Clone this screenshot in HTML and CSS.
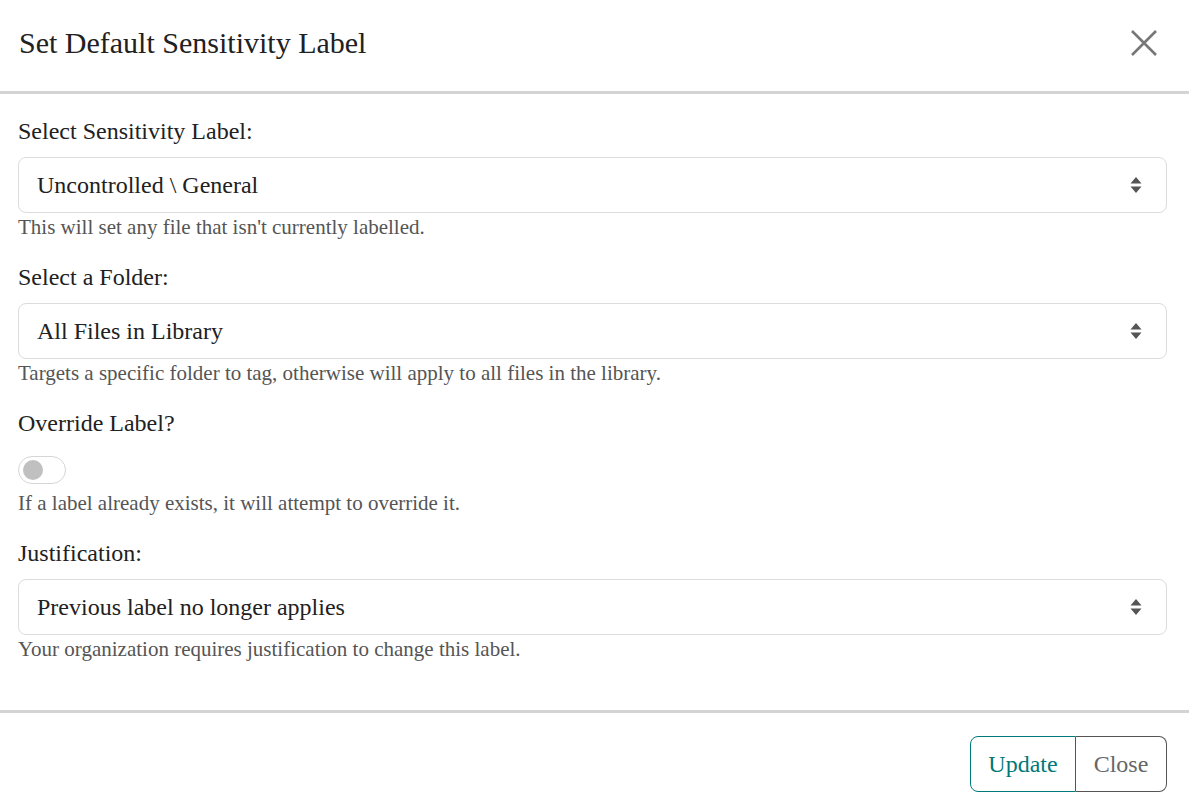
FILE: index.html
```html
<!DOCTYPE html>
<html>
<head>
<meta charset="utf-8">
<link rel="stylesheet" href="styles.css">
</head>
<body>
<div class="modal">
  <div class="header">
    <h1 class="title">Set Default Sensitivity Label</h1>
    <button class="x-btn" aria-label="Close">
      <svg width="28" height="28" viewBox="0 0 28 28"><path d="M2 2 L26 26 M26 2 L2 26" stroke="#777" stroke-width="2.6" fill="none"/></svg>
    </button>
  </div>
  <div class="body">
    <div class="group">
      <div class="label">Select Sensitivity Label:</div>
      <div class="select"><span>Uncontrolled \ General</span><span class="arrows"><svg width="12" height="18" viewBox="0 0 12 18"><path d="M6 1 L11.5 7.5 L0.5 7.5 Z M6 17 L11.5 10.5 L0.5 10.5 Z" fill="#555"/></svg></span></div>
      <div class="help">This will set any file that isn't currently labelled.</div>
    </div>
    <div class="group">
      <div class="label">Select a Folder:</div>
      <div class="select"><span>All Files in Library</span><span class="arrows"><svg width="12" height="18" viewBox="0 0 12 18"><path d="M6 1 L11.5 7.5 L0.5 7.5 Z M6 17 L11.5 10.5 L0.5 10.5 Z" fill="#555"/></svg></span></div>
      <div class="help">Targets a specific folder to tag, otherwise will apply to all files in the library.</div>
    </div>
    <div class="group">
      <div class="label">Override Label?</div>
      <div class="toggle-row"><span class="toggle"><span class="knob"></span></span></div>
      <div class="help help-toggle">If a label already exists, it will attempt to override it.</div>
    </div>
    <div class="group">
      <div class="label">Justification:</div>
      <div class="select"><span>Previous label no longer applies</span><span class="arrows"><svg width="12" height="18" viewBox="0 0 12 18"><path d="M6 1 L11.5 7.5 L0.5 7.5 Z M6 17 L11.5 10.5 L0.5 10.5 Z" fill="#555"/></svg></span></div>
      <div class="help">Your organization requires justification to change this label.</div>
    </div>
  </div>
  <div class="footer">
    <div class="btn-group">
      <button class="btn btn-update">Update</button>
      <button class="btn btn-close">Close</button>
    </div>
  </div>
</div>
</body>
</html>
```
FILE: styles.css
```css
html, body {
  margin: 0;
  padding: 0;
  background: #fff;
}
body {
  font-family: "Liberation Serif", "Times New Roman", serif;
  color: #212121;
}
.modal {
  width: 1189px;
  height: 811px;
  display: flex;
  flex-direction: column;
}
.header {
  height: 94px;
  border-bottom: 3px solid #d4d4d4;
  display: flex;
  align-items: center;
  justify-content: space-between;
  padding: 0 31px 0 19px;
  box-sizing: border-box;
}
.title {
  margin: 0;
  font-size: 30px;
  font-weight: normal;
  line-height: 34px;
  color: #212121;
  padding-bottom: 5px;
}
.x-btn {
  border: none;
  background: none;
  padding: 0;
  width: 28px;
  height: 28px;
  display: flex;
  margin-bottom: 6px;
}
.body {
  padding: 23px 22px 0 18px;
  height: 616px;
  box-sizing: border-box;
}
.group {
  margin-bottom: 24px;
}
.label {
  font-size: 24px;
  line-height: 28px;
  margin-bottom: 12px;
  color: #212121;
}
.select {
  height: 56px;
  box-sizing: border-box;
  border: 1px solid #dcdcdc;
  border-radius: 8px;
  display: flex;
  align-items: center;
  justify-content: space-between;
  padding: 0 24px 0 18px;
  font-size: 24px;
  color: #212121;
}
.arrows {
  display: flex;
}
.help {
  margin-top: 2px;
  font-size: 21px;
  line-height: 24px;
  color: #555;
}
.help-toggle {
  margin-top: 7px;
}
.toggle-row {
  display: flex;
  padding-top: 7px;
}
.toggle {
  width: 48px;
  height: 28px;
  box-sizing: border-box;
  border: 1px solid #d6d6d6;
  border-radius: 14px;
  display: flex;
  align-items: center;
  padding-left: 4px;
}
.knob {
  width: 20px;
  height: 20px;
  border-radius: 50%;
  background: #c0c0c0;
}
.footer {
  border-top: 3px solid #d4d4d4;
  flex: 1;
  display: flex;
  justify-content: flex-end;
  align-items: flex-start;
  padding: 23px 22px 0 0;
}
.btn-group {
  display: flex;
}
.btn {
  font-family: "Liberation Serif", "Times New Roman", serif;
  font-size: 24px;
  height: 56px;
  background: #fff;
  padding: 0;
  margin: 0;
  cursor: pointer;
}
.btn-update {
  color: #00797a;
  border: 1px solid #00797a;
  border-radius: 8px 0 0 8px;
  width: 106px;
}
.btn-close {
  color: #666;
  border: 1px solid #555;
  border-left: none;
  border-radius: 0 8px 8px 0;
  width: 91px;
}
```
